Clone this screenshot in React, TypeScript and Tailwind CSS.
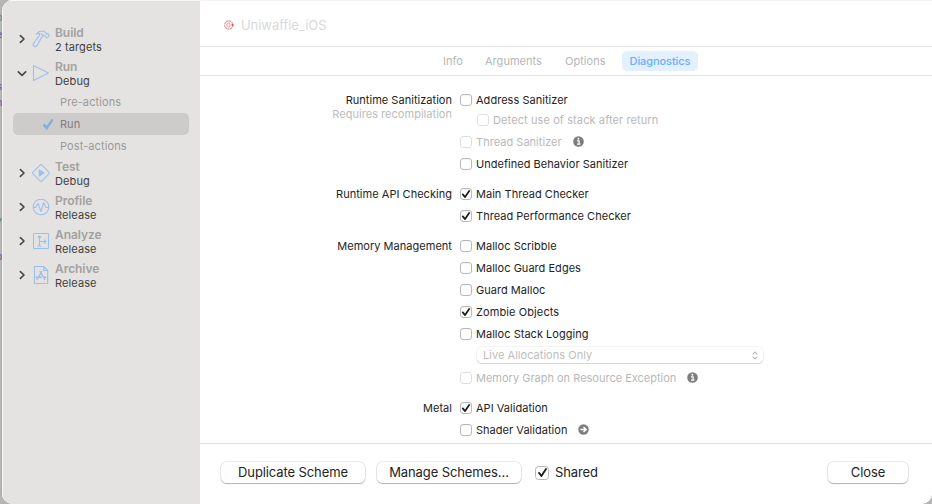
import type { ReactNode } from "react";

function Check({ on, dim, big }: { on?: boolean; dim?: boolean; big?: boolean }) {
  return (
    <span
      className={`flex shrink-0 items-center justify-center border bg-white ${big ? "h-[14px] w-[14px] rounded-[3.5px]" : "h-3 w-3 rounded-[3px]"} ${dim ? "border-[#dfdfdf]" : "border-[#b9b9b9] shadow-[inset_0_1px_1px_rgba(0,0,0,0.05)]"}`}
    >
      {on && (
        <svg viewBox="0 0 10 10" className={big ? "h-[11px] w-[11px] shrink-0" : "h-[10px] w-[10px] shrink-0"} fill="none" stroke="#1c1c1c" strokeWidth="1.7" strokeLinecap="round" strokeLinejoin="round">
          <path d="M1.8 5.4 4 8.1 8.2 1.9" />
        </svg>
      )}
    </span>
  );
}

function InfoDot() {
  return (
    <svg viewBox="0 0 11 11" className="-mt-px ml-[11px] h-[11px] w-[11px]">
      <circle cx="5.5" cy="5.5" r="5.3" fill="#7d7d7d" />
      <circle cx="5.4" cy="2.8" r="0.95" fill="#fff" />
      <path d="M4 4.8h2.1v3.1M4 8.2h3.4" fill="none" stroke="#fff" strokeWidth="1.2" />
    </svg>
  );
}

function ArrowDot() {
  return (
    <svg viewBox="0 0 11 11" className="-mt-px ml-[11px] h-[11px] w-[11px]">
      <circle cx="5.5" cy="5.5" r="5.2" fill="#7d7d7d" />
      <path d="M2.4 5.5h5M5.5 3l2.6 2.5L5.5 8" fill="none" stroke="#fff" strokeWidth="1.5" />
    </svg>
  );
}

function Row({ label, on, dim, extra, className = "h-[22px]" }: { label: string; on?: boolean; dim?: boolean; extra?: ReactNode; className?: string }) {
  return (
    <div className={`flex items-center ${className}`}>
      <Check on={on} dim={dim} />
      <span className={`ml-1 whitespace-nowrap ${dim ? "text-[#b8b8b8]" : "text-[#232323]"}`}>{label}</span>
      {extra}
    </div>
  );
}

function Group({ title, note, children }: { title: string; note?: string; children: ReactNode }) {
  return (
    <section className="mb-2 flex">
      <div className="mr-2 w-[252px] shrink-0 text-right">
        <div className="h-[22px] leading-[22px] text-[#232323]">{title}</div>
        {note && <div className="-mt-[4px] leading-[14px] text-[#bcbcbc]">{note}</div>}
      </div>
      <div>{children}</div>
    </section>
  );
}

function Chevron({ open }: { open?: boolean }) {
  return (
    <svg viewBox="0 0 10 10" className="-mt-[2px] h-[10px] w-[10px] shrink-0" fill="none" stroke="#464646" strokeWidth="1.6" strokeLinecap="round" strokeLinejoin="round">
      <path d={open ? "M1.3 3.9 5 7.4 8.7 3.9" : "M3.4 1.6 7 5 3.4 8.4"} />
    </svg>
  );
}

function Scheme({ title, sub, open, icon }: { title: string; sub: string; open?: boolean; icon: ReactNode }) {
  return (
    <div className="flex h-[34px] items-center pl-[14px]">
      <Chevron open={open} />
      <svg viewBox="0 0 18 18" className="-mt-[2px] ml-[5px] h-[18px] w-[18px] shrink-0" fill="none" stroke="#9cc0ed" strokeWidth="1.1" strokeLinejoin="round" strokeLinecap="round">
        {icon}
      </svg>
      <div className="-mt-px ml-[5px]">
        <div className="text-[12px] font-semibold leading-[14px] tracking-[-0.05px] text-[#a2a1a0]">{title}</div>
        <div className="text-[11px] leading-[14px] tracking-[0.1px] text-[#3f3f3e]">{sub}</div>
      </div>
    </div>
  );
}

function PushButton({ children, className }: { children: ReactNode; className: string }) {
  return (
    <button className={`flex h-[21px] items-center justify-center rounded-[5.5px] bg-white text-[13px] tracking-[-0.1px] text-[#232323] shadow-[0_0_0_0.75px_rgba(0,0,0,0.11),0_1px_1px_rgba(0,0,0,0.24)] ${className}`}>
      {children}
    </button>
  );
}

export default function App() {
  return (
    <div className="relative flex h-[504px] w-[932px] overflow-hidden bg-[#b6b6b6] pl-[2px] font-['Inter','Liberation_Sans',sans-serif] text-[11px] tracking-[0.03px]">
      <div className="absolute left-0 top-0 h-full w-[2px] overflow-hidden font-['Liberation_Mono',monospace] text-[11px]">
        <span className="absolute -left-1 top-[10px] text-[#528b98]">p</span>
        <span className="absolute -left-1 top-[27px] text-[#6b53a5]">e</span>
        <span className="absolute -left-1 top-[79px] text-[#6b53a5]">s</span>
        <span className="absolute -left-1 top-[95px] text-[#6b53a5]">n</span>
        <span className="absolute -left-1 top-[215px] text-[#4f7c80]">/</span>
        <span className="absolute -left-1 top-[249px] text-[#6b53a5]">p</span>
      </div>
      <div className="relative flex w-[930px] overflow-hidden rounded-[10px] rounded-tr-none bg-white shadow-[0_0_1px_rgba(0,0,0,0.5)]">
        <aside className="w-[198px] shrink-0 border-l border-t border-[#f6f6f5] bg-[#e4e3e1] pt-[22px]">
          <Scheme title="Build" sub="2 targets" icon={<path d="M4.4 4.1C6 1.8 8.3.9 11 1l2.8 1.4.6 1.8 1-.7 1.8 1.6-1.4 2.4-1.3.2-1.6-1.8-2-.5L5 15.4 3.5 17 .9 15.2l.8-2 6-8.3-.5-1.6zM9 3.6l2 1.6" />} />
          <Scheme title="Run" sub="Debug" open icon={<path d="M1.5 1.5 16.5 9 1.5 16.5z" />} />
          <div className="text-[#9b9a99]">
            <div className="flex h-[22px] items-center pl-[57px] tracking-[0.1px]">Pre-actions</div>
            <div className="ml-[10px] mr-[11px] flex h-[22px] items-center rounded-[5px] bg-[#cdccca] pl-[29px] text-[#7f7e7d]">
              <svg viewBox="0 0 12 12" className="mr-[6px] h-3 w-3" fill="none" stroke="#84ade0" strokeWidth="2.6">
                <path d="M1.5 6.5 4.8 10 10.5 1.4" />
              </svg>
              Run
            </div>
            <div className="flex h-[22px] items-center pl-[57px] tracking-[0.1px]">Post-actions</div>
          </div>
          <Scheme title="Test" sub="Debug" icon={<><path d="M8.3.8Q9 .1 9.7.8l7.5 7.5q.7.7 0 1.4l-7.5 7.5q-.7.7-1.4 0L.8 9.7Q.1 9 .8 8.3z" /><path d="M7.2 6v6L12 9z" fill="#9cc0ed" /></>} />
          <Scheme title="Profile" sub="Release" icon={<><circle cx="9" cy="9" r="7.8" /><path d="M1.5 9.5h2.2L6 5.5l3 8 2.6-9 2.3 5h2.5" /></>} />
          <Scheme title="Analyze" sub="Release" icon={<><rect x="1.5" y="1.5" width="15" height="15" rx="0.6" /><path d="M7.5 14V4M6 5.5 7.5 4 9 5.5M7.5 9.5H14M12.5 8 14 9.5 12.5 11M6 14h3" /></>} />
          <Scheme title="Archive" sub="Release" icon={<><path d="M2.5.5h9.2l4 4v13H2.5zM11.7.5v4h4" /><path d="m9.7 5.5-4.6 8M8 5.5l4.8 8M4 11.3h5.3M11.5 11.3H14" strokeWidth="1.4" /></>} />
        </aside>
        <main className="flex min-w-0 flex-1 flex-col border-t border-[#f4f4f4] bg-white">
          <header className="flex h-[46px] shrink-0 items-center border-b border-[#e2e2e2] pl-6 pt-[5px]">
            <svg viewBox="0 0 10 10" className="-mt-[2px] h-[10px] w-[10px]" fill="none" stroke="#e58c98">
              <circle cx="4.8" cy="5" r="4.1" strokeWidth="1.1" strokeDasharray="2.2 .5" />
              <path d="M6.2 3.6a2 2 0 1 0 0 2.8M4.8 5h4" strokeWidth=".9" />
              <circle cx="8.7" cy="5" r=".9" fill="#d94b60" stroke="none" />
            </svg>
            <span className="ml-[7px] text-[13px] tracking-[-0.05px] text-[#dadada]">Uniwaffle_iOS</span>
          </header>
          <nav className="flex h-[29px] shrink-0 items-center border-b border-[#e2e2e2] pl-[243px] text-[#b6b6b6]">
            <span className="w-5">Info</span>
            <span className="ml-[22px] w-[57px]">Arguments</span>
            <span className="ml-[23px] w-[41px]">Options</span>
            <span className="ml-4 flex h-5 w-[76px] items-center justify-center rounded-[5px] bg-[#e2f0ff] font-medium tracking-[-0.08px] text-[#6badff]">Diagnostics</span>
          </nav>
          <div className="h-[367px] shrink-0 overflow-hidden pt-[13px]">
            <Group title="Runtime Sanitization" note="Requires recompilation">
              <Row label="Address Sanitizer" />
              <Row label="Detect use of stack after return" dim className="h-5 pb-[2px] pl-[17px] tracking-[0.1px]" />
              <Row label="Thread Sanitizer" dim extra={<InfoDot />} />
              <Row label="Undefined Behavior Sanitizer" />
            </Group>
            <Group title="Runtime API Checking">
              <Row label="Main Thread Checker" on />
              <Row label="Thread Performance Checker" on />
            </Group>
            <Group title="Memory Management">
              <Row label="Malloc Scribble" />
              <Row label="Malloc Guard Edges" />
              <Row label="Guard Malloc" />
              <Row label="Zombie Objects" on className="h-[22px] tracking-[0.1px]" />
              <Row label="Malloc Stack Logging" />
              <div className="h-[22px] pl-[17px] pt-[2px]">
                <div className="flex h-4 w-[286px] items-center justify-between rounded-[4.5px] bg-white pl-[6px] pr-[5px] text-[#bdbdbd] shadow-[0_0_0_0.75px_rgba(0,0,0,0.06),0_1px_1px_rgba(0,0,0,0.14)]">
                  Live Allocations Only
                  <svg viewBox="0 0 6 9" className="h-[9px] w-[6px]" fill="none" stroke="#b5b5b5" strokeWidth="1.1" strokeLinecap="round" strokeLinejoin="round">
                    <path d="M1 3.1 3 1.1l2 2M1 5.9l2 2 2-2" />
                  </svg>
                </div>
              </div>
              <Row label="Memory Graph on Resource Exception" dim extra={<InfoDot />} className="h-[22px] tracking-[0px]" />
            </Group>
            <Group title="Metal">
              <Row label="API Validation" on />
              <Row label="Shader Validation" extra={<ArrowDot />} />
            </Group>
          </div>
          <footer className="flex flex-1 items-center border-t border-[#e0e0e0] pb-[3px] pl-[21px] pr-6">
            <PushButton className="w-[144px]">Duplicate Scheme</PushButton>
            <PushButton className="ml-3 w-[144px]">Manage Schemes...</PushButton>
            <span className="ml-[14px] flex items-center text-[13px] tracking-[-0.1px] text-[#232323]">
              <Check on big />
              <span className="ml-[6px]">Shared</span>
            </span>
            <PushButton className="ml-auto w-20">Close</PushButton>
          </footer>
        </main>
      </div>
    </div>
  );
}
